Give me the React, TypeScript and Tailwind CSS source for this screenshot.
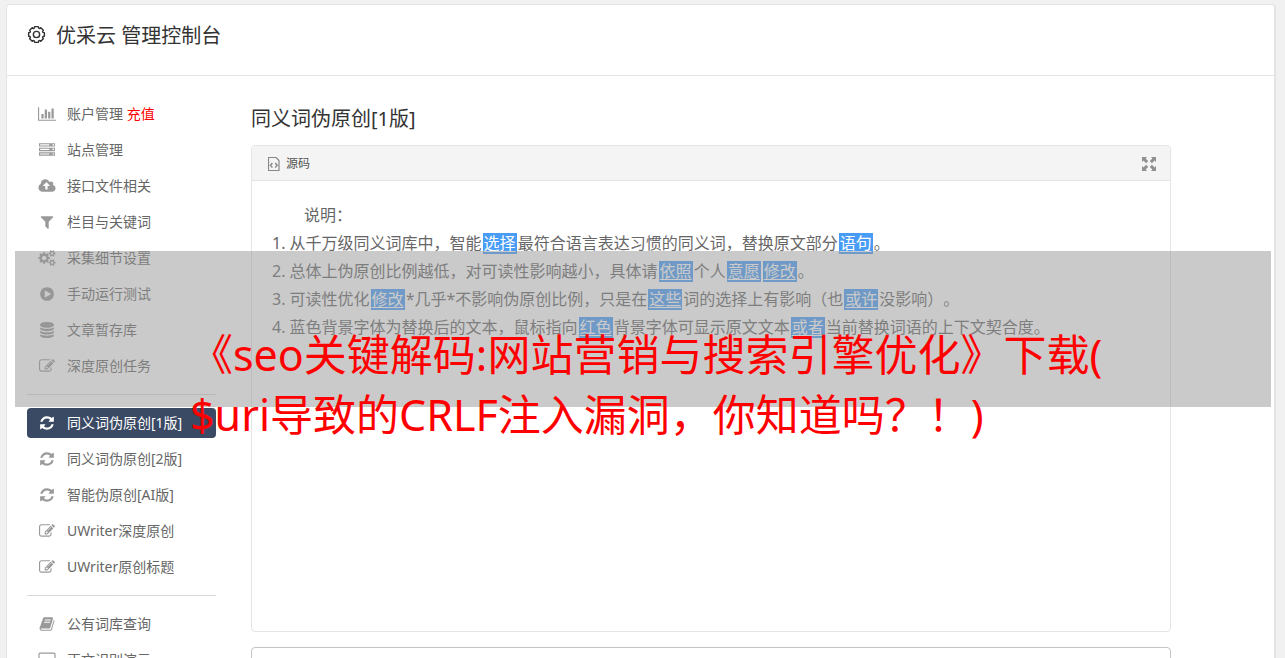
import type { ReactNode } from 'react'
import clsx from 'clsx'

interface IconShape {
  box: string
  width: number
  d: string
}

const icons = {
  chart: {
    box: '0 0 2048 1792',
    width: 18,
    d: 'M640 896v512h-256v-512h256zm384-512v1024h-256v-1024h256zm1024 1152v128h-2048v-1536h128v1408h1920zm-640-896v768h-256v-768h256zm384-384v1152h-256v-1152h256z',
  },
  server: {
    box: '0 0 1792 1792',
    width: 16,
    d: 'M128 1408h1024v-128h-1024v128zm0-512h1024v-128h-1024v128zm1568 448q0-40-28-68t-68-28-68 28-28 68 28 68 68 28 68-28 28-68zm-1568-960h1024v-128h-1024v128zm1568 448q0-40-28-68t-68-28-68 28-28 68 28 68 68 28 68-28 28-68zm0-512q0-40-28-68t-68-28-68 28-28 68 28 68 68 28 68-28 28-68zm96 832v384h-1792v-384h1792zm0-512v384h-1792v-384h1792zm0-512v384h-1792v-384h1792z',
  },
  upload: {
    box: '0 0 1920 1792',
    width: 18,
    d: 'M1280 864q0-14-9-23l-352-352q-9-9-23-9t-23 9l-351 351q-10 12-10 24 0 14 9 23t23 9h224v352q0 13 9.5 22.5t22.5 9.5h192q13 0 22.5-9.5t9.5-22.5v-352h224q13 0 22.5-9.5t9.5-22.5zm640 288q0 159-112.5 271.5t-271.5 112.5h-1088q-185 0-316.5-131.5t-131.5-316.5q0-130 70-240t188-165q-2-30-2-43 0-212 150-362t362-150q156 0 285.5 87t188.5 231q71-62 166-62 106 0 181 75t75 181q0 76-41 138 130 31 213.5 135.5t83.5 238.5z',
  },
  filter: {
    box: '0 0 1792 1792',
    width: 16,
    d: 'M1595 295q17 41-14 70l-493 493v742q0 42-39 59-13 5-25 5-27 0-45-19l-256-256q-19-19-19-45v-486l-493-493q-31-29-14-70 17-39 59-39h1280q42 0 59 39z',
  },
  cogs: {
    box: '0 0 1920 1792',
    width: 18,
    d: 'M896 896q0-106-75-181t-181-75-181 75-75 181 75 181 181 75 181-75 75-181zm768 512q0-52-38-90t-90-38-90 38-38 90q0 53 37.5 90.5t90.5 37.5 90.5-37.5 37.5-90.5zm0-1024q0-52-38-90t-90-38-90 38-38 90q0 53 37.5 90.5t90.5 37.5 90.5-37.5 37.5-90.5zm-384 421v185q0 10-7 19.5t-16 10.5l-155 24q-11 35-32 76 34 48 90 115 7 11 7 20 0 12-7 19-23 30-82.5 89.5t-78.5 59.5q-11 0-21-7l-115-90q-37 19-77 31-11 108-23 155-7 24-30 24h-186q-11 0-20-7.5t-10-17.5l-23-153q-34-10-75-31l-118 89q-7 7-20 7-11 0-21-8-144-133-144-160 0-9 7-19 10-14 41-53t47-61q-23-44-35-82l-152-24q-10-1-17-9.5t-7-19.5v-185q0-10 7-19.5t16-10.5l155-24q11-35 32-76-34-48-90-115-7-11-7-20 0-12 7-20 22-30 82-89t79-59q11 0 21 7l115 90q34-18 77-32 11-108 23-154 7-24 30-24h186q11 0 20 7.5t10 17.5l23 153q34 10 75 31l118-89q8-7 20-7 11 0 21 8 144 133 144 160 0 8-7 19-12 16-42 54t-45 60q23 48 34 82l152 23q10 2 17 10.5t7 19.5zm640 533v140q0 16-149 31-12 27-30 52 51 113 51 138 0 4-4 7-122 71-124 71-8 0-46-47t-52-68q-20 2-30 2t-30-2q-14 21-52 68t-46 47q-2 0-124-71-4-3-4-7 0-25 51-138-18-25-30-52-149-15-149-31v-140q0-16 149-31 13-29 30-52-51-113-51-138 0-4 4-7 4-2 35-20t59-34 30-16q8 0 46 46.5t52 67.5q20-2 30-2t30 2q51-71 92-112l6-2q4 0 124 70 4 3 4 7 0 25-51 138 17 23 30 52 149 15 149 31zm0-1024v140q0 16-149 31-12 27-30 52 51 113 51 138 0 4-4 7-122 71-124 71-8 0-46-47t-52-68q-20 2-30 2t-30-2q-14 21-52 68t-46 47q-2 0-124-71-4-3-4-7 0-25 51-138-18-25-30-52-149-15-149-31v-140q0-16 149-31 13-29 30-52-51-113-51-138 0-4 4-7 4-2 35-20t59-34 30-16q8 0 46 46.5t52 67.5q20-2 30-2t30 2q51-71 92-112l6-2q4 0 124 70 4 3 4 7 0 25-51 138 17 23 30 52 149 15 149 31z',
  },
  play: {
    box: '0 0 1792 1792',
    width: 16,
    d: 'M896 128q209 0 385.5 103t279.5 279.5 103 385.5-103 385.5-279.5 279.5-385.5 103-385.5-103-279.5-279.5-103-385.5 103-385.5 279.5-279.5 385.5-103zm384 823q32-18 32-55t-32-55l-544-320q-31-19-64-1-32 19-32 56v640q0 37 32 56 16 8 32 8 17 0 32-9z',
  },
  database: {
    box: '0 0 1792 1792',
    width: 16,
    d: 'M896 768q237 0 443-43t325-127v170q0 69-103 128t-280 93.5-385 34.5-385-34.5-280-93.5-103-128v-170q119 84 325 127t443 43zm0 768q237 0 443-43t325-127v170q0 69-103 128t-280 93.5-385 34.5-385-34.5-280-93.5-103-128v-170q119 84 325 127t443 43zm0-384q237 0 443-43t325-127v170q0 69-103 128t-280 93.5-385 34.5-385-34.5-280-93.5-103-128v-170q119 84 325 127t443 43zm0-1152q208 0 385 34.5t280 93.5 103 128v128q0 69-103 128t-280 93.5-385 34.5-385-34.5-280-93.5-103-128v-128q0-69 103-128t280-93.5 385-34.5z',
  },
  edit: {
    box: '0 0 1792 1792',
    width: 16,
    d: 'M888 1184l116-116-152-152-116 116v56h96v96h56zm440-720q-16-16-33 1l-350 350q-17 17-1 33t33-1l350-350q17-17 1-33zm80 594v190q0 119-84.5 203.5t-203.5 84.5h-832q-119 0-203.5-84.5t-84.5-203.5v-832q0-119 84.5-203.5t203.5-84.5h832q63 0 117 25 15 7 18 23 3 17-9 29l-49 49q-14 14-32 8-23-6-45-6h-832q-66 0-113 47t-47 113v832q0 66 47 113t113 47h832q66 0 113-47t47-113v-126q0-13 9-22l64-64q15-15 35-7t20 29zm-96-738l288 288-672 672h-288v-288zm444 132l-92 92-288-288 92-92q28-28 68-28t68 28l152 152q28 28 28 68t-28 68z',
  },
  refresh: {
    box: '0 0 1792 1792',
    width: 16,
    d: 'M1639 1056q0 5-1 7-64 268-268 434.5t-478 166.5q-146 0-282.5-55t-243.5-157l-129 129q-19 19-45 19t-45-19-19-45v-448q0-26 19-45t45-19h448q26 0 45 19t19 45-19 45l-137 137q71 66 161 102t187 36q134 0 250-65t186-179q11-17 53-117 8-23 30-23h192q13 0 22.5 9.5t9.5 22.5zm25-800v448q0 26-19 45t-45 19h-448q-26 0-45-19t-19-45 19-45l138-138q-148-137-349-137-134 0-250 65t-186 179q-11 17-53 117-8 23-30 23h-199q-13 0-22.5-9.5t-9.5-22.5v-7q65-268 270-434.5t480-166.5q146 0 284 55.5t245 156.5l130-129q19-19 45-19t45 19 19 45z',
  },
  book: {
    box: '0 0 1792 1792',
    width: 16,
    d: 'M1703 478q40 57 18 129l-275 906q-19 64-76.5 107.5t-122.5 43.5h-923q-77 0-148.5-53.5t-99.5-131.5q-24-67-2-127 0-4 3-27t4-37q1-8-3-21.5t-3-19.5q2-11 8-21t16.5-23.5 16.5-23.5q23-38 45-91.5t30-91.5q3-10 .5-30t-.5-28q3-11 17-28t17-23q21-36 42-92t25-90q1-9-2.5-32t.5-28q4-13 22-30.5t22-22.5q19-26 42.5-84.5t27.5-96.5q1-8-3-25.5t-2-26.5q2-8 9-18t18-23 17-21q8-12 16.5-30.5t15-35 16-36 19.5-32 26.5-23.5 36-11.5 47.5 5.5l-1 3q38-9 51-9h761q74 0 114 56t18 130l-274 906q-36 119-71.5 153.5t-128.5 34.5h-869q-27 0-38 15-11 16-1 43 24 70 144 70h923q29 0 56-15.5t35-41.5l300-987q7-22 5-57 38 15 59 43zm-1064 2q-4 13 2 22.5t20 9.5h608q13 0 25.5-9.5t16.5-22.5l21-64q4-13-2-22.5t-20-9.5h-608q-13 0-25.5 9.5t-16.5 22.5zm-83 256q-4 13 2 22.5t20 9.5h608q13 0 25.5-9.5t16.5-22.5l21-64q4-13-2-22.5t-20-9.5h-608q-13 0-25.5 9.5t-16.5 22.5z',
  },
  desktop: {
    box: '0 0 1920 1792',
    width: 18,
    d: 'M1792 1056v-832q0-13-9.5-22.5t-22.5-9.5h-1600q-13 0-22.5 9.5t-9.5 22.5v832q0 13 9.5 22.5t22.5 9.5h1600q13 0 22.5-9.5t9.5-22.5zm128-832v1088q0 66-47 113t-113 47h-544q0 37 16 77.5t32 71 16 43.5q0 26-19 45t-45 19h-512q-26 0-45-19t-19-45q0-14 16-44t32-70 16-78h-544q-66 0-113-47t-47-113v-1088q0-66 47-113t113-47h1600q66 0 113 47t47 113z',
  },
} satisfies Record<string, IconShape>

type IconName = keyof typeof icons

interface MenuItem {
  icon: IconName
  label: string
  extra?: string
  active?: boolean
}

const menu: MenuItem[][] = [
  [
    { icon: 'chart', label: '账户管理', extra: '充值' },
    { icon: 'server', label: '站点管理' },
    { icon: 'upload', label: '接口文件相关' },
    { icon: 'filter', label: '栏目与关键词' },
    { icon: 'cogs', label: '采集细节设置' },
    { icon: 'play', label: '手动运行测试' },
    { icon: 'database', label: '文章暂存库' },
    { icon: 'edit', label: '深度原创任务' },
  ],
  [
    { icon: 'refresh', label: '同义词伪原创[1版]', active: true },
    { icon: 'refresh', label: '同义词伪原创[2版]' },
    { icon: 'refresh', label: '智能伪原创[AI版]' },
    { icon: 'edit', label: 'UWriter深度原创' },
    { icon: 'edit', label: 'UWriter原创标题' },
  ],
  [
    { icon: 'book', label: '公有词库查询' },
    { icon: 'desktop', label: '正文识别演示' },
  ],
]

function MenuIcon({ name }: { name: IconName }) {
  const { box, width, d } = icons[name]
  return (
    <svg viewBox={box} width={width} height={16} fill="currentColor" aria-hidden="true">
      <path d={d} />
    </svg>
  )
}

// Eight rounded teeth around (10, 10)
function gearPath() {
  const at = (deg: number, r: number) => {
    const rad = (deg * Math.PI) / 180
    return `${(10 + r * Math.cos(rad)).toFixed(2)} ${(10 + r * Math.sin(rad)).toFixed(2)}`
  }
  let d = `M${at(-13, 8.5)}`
  for (let a = 0; a < 360; a += 45) {
    d += `L${at(a + 13, 8.5)}Q${at(a + 22.5, 5.6)} ${at(a + 32, 8.5)}`
  }
  return d + 'Z'
}

function GearIcon() {
  return (
    <svg viewBox="0 0 20 20" className="size-[19px] text-[#333]" fill="none" stroke="currentColor" strokeWidth="1.5" strokeLinejoin="round" aria-hidden="true">
      <path d={gearPath()} />
      <circle cx="10" cy="10" r="3.3" />
    </svg>
  )
}

function SourceIcon() {
  return (
    <svg viewBox="0 0 12 14" className="h-[14px] w-3 text-[#888]" fill="none" stroke="currentColor" aria-hidden="true">
      <path d="M.5.5h7.5l3 3v10h-10.5z" strokeWidth="1.2" />
      <path d="M4.4 6 2.4 8.3l2 2.3M7.2 6l2 2.3-2 2.3" strokeWidth="1.4" />
    </svg>
  )
}

function ExpandIcon() {
  return (
    <svg viewBox="0 0 14 14" className="size-[14px]" fill="currentColor" aria-hidden="true">
      <path d="M0 0h5L3.6 1.5 6.2 4.1 4.1 6.2 1.5 3.6 0 5zM14 0v5l-1.5-1.4L9.9 6.2 7.8 4.1l2.6-2.6L9 0zM0 14V9l1.5 1.4L4.1 7.8l2.1 2.1-2.6 2.6L5 14zM14 14H9l1.4-1.5L7.8 9.9l2.1-2.1 2.6 2.6L14 9z" />
    </svg>
  )
}

// Replaced synonym
function Word({ children }: { children: ReactNode }) {
  return (
    <a href="#" className="mx-px inline-block bg-[#489cf6] px-px leading-[21px] text-white underline underline-offset-2">
      {children}
    </a>
  )
}

export default function App() {
  return (
    <div className="relative h-screen overflow-hidden bg-[#f1f1f1] pt-1 pr-[9px] pl-[6px] font-['Noto_Sans','Noto_Sans_CJK_SC',sans-serif] text-[#666] [text-spacing-trim:space-all]">
      <div className="min-h-full rounded border border-r-2 border-[#e4e4e4] bg-white">
        <header className="flex h-[71px] items-start gap-[10px] border-b border-[#e4e4e4] pt-5 pl-5">
          <GearIcon />
          <h1 className="-mt-1 text-xl leading-[30px] text-[#333]">优采云 管理控制台</h1>
        </header>

        <div className="flex items-start gap-[35px] pt-[23px] pr-[103px] pl-5">
          <nav className="w-[189px] shrink-0 text-sm">
            {menu.map((group, i) => (
              <div key={i}>
                {i > 0 && <hr className="my-[13px] border-[#d9d9d9]" />}
                <ul className="space-y-[6px]">
                  {group.map(item => (
                    <li key={item.label}>
                      <a
                        href="#"
                        className={clsx(
                          'flex h-[30px] items-center gap-[10px] rounded pl-[10px] whitespace-nowrap',
                          item.active && 'bg-[#3a4a64] text-white',
                        )}
                      >
                        <span className={clsx('flex w-5 justify-center', !item.active && 'text-[#999]')}>
                          <MenuIcon name={item.icon} />
                        </span>
                        <span>
                          {item.label}
                          {item.extra && <span className="text-[#f00]"> {item.extra}</span>}
                        </span>
                      </a>
                    </li>
                  ))}
                </ul>
              </div>
            ))}
          </nav>

          <main className="min-w-0 flex-1 pt-[5px]">
            <h2 className="text-xl leading-[30px] text-[#333]">同义词伪原创[1版]</h2>

            <section className="mt-[11px] rounded border border-[#e4e4e4]">
              <div className="flex h-[35px] items-center justify-between rounded-t border-b border-[#e4e4e4] bg-[#f4f4f4] pt-px pr-[14px] pl-4">
                <div className="flex items-center gap-[6px] text-xs text-[#555]">
                  <SourceIcon />
                  源码
                </div>
                <button type="button" aria-label="全屏" className="text-[#8f8f8f]">
                  <ExpandIcon />
                </button>
              </div>
              <div className="min-h-[450px] p-5 text-base leading-7">
                <p className="indent-8">说明：</p>
                <p>1. 从千万级同义词库中，智能<Word>选择</Word>最符合语言表达习惯的同义词，替换原文部分<Word>语句</Word>。</p>
                <p>2. 总体上伪原创比例越低，对可读性影响越小，具体请<Word>依照</Word>个人<Word>意愿</Word><Word>修改</Word>。</p>
                <p>3. 可读性优化<Word>修改</Word>*几乎*不影响伪原创比例，只是在<Word>这些</Word>词的选择上有影响（也<Word>或许</Word>没影响）。</p>
                <p>4. 蓝色背景字体为替换后的文本，鼠标指向<Word>红色</Word>背景字体可显示原文文本<Word>或者</Word>当前替换词语的上下文契合度。</p>
              </div>
            </section>

            <textarea
              aria-label="原文"
              className="mt-[15px] block h-[200px] w-full resize-none rounded border border-[#c4c4c4] p-3 text-sm outline-none"
            />
          </main>
        </div>
      </div>

      {/* Caption band */}
      <div className="absolute top-[251px] right-[14px] left-[15px] h-[156px] bg-[#969696]/50 pt-[74px] pl-[175px] text-[43px] leading-[60px] whitespace-nowrap text-[#f00]">
        <p>《seo关键解码:网站营销与搜索引擎优化》下载(</p>
        <p>$uri导致的CRLF注入漏洞，你知道吗？！)</p>
      </div>
    </div>
  )
}
